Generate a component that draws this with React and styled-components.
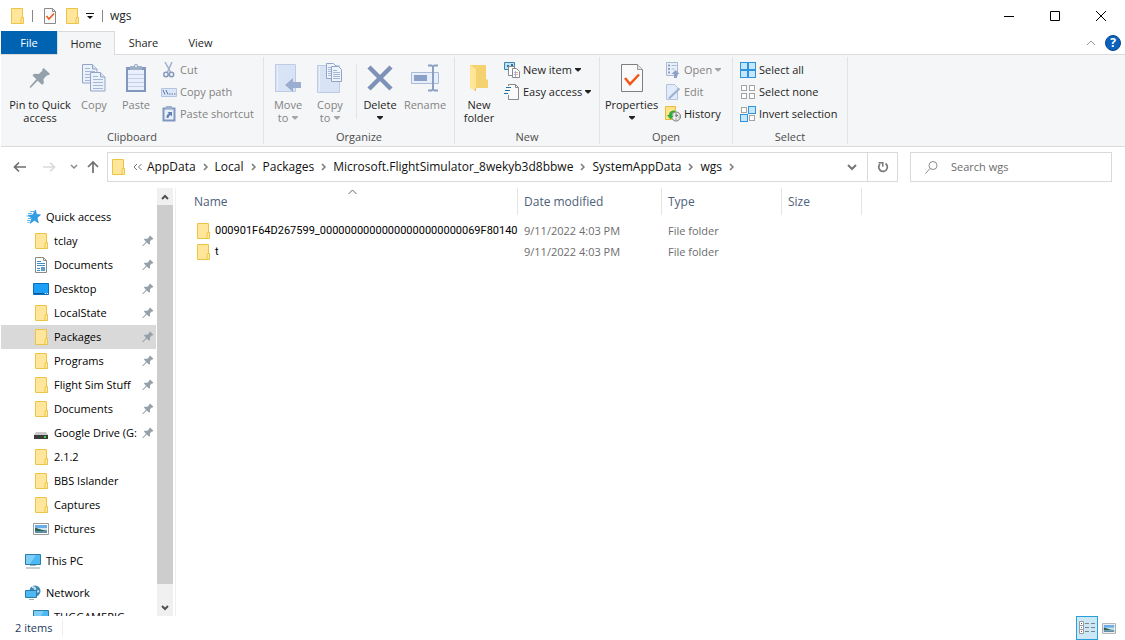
import React from "react";
import styled, { createGlobalStyle, css } from "styled-components";

const Global = createGlobalStyle`
  *, *::before, *::after { box-sizing: border-box; }
  body { margin: 0; background: #fff; }
  body, button, input, table { font: 12px/16px "Open Sans", "Noto Sans", sans-serif; color: #1e1e1e; }
  button { border: 0; padding: 0; background: none; }
  a { color: inherit; text-decoration: none; }
  ul, ol { list-style: none; margin: 0; padding: 0; }
  svg { display: block; flex: none; }
`;

/* ---------- icons ---------- */
const Svg = ({ w = 16, h = 16, children, ...rest }) => (
  <svg width={w} height={h} viewBox={`0 0 ${w} ${h}`} fill="none" aria-hidden="true" {...rest}>{children}</svg>
);
const Folder = () => (
  <Svg>
    <path d="M2.500.5h11v9h.500v6H2.500z" fill="#ffe69b" stroke="#edc544" />
    <path d="M12.500 9.500h2v6h-2.500v-4z" fill="#ffe9a8" stroke="#edc544" />
  </Svg>
);
const DocCheck = () => (
  <Svg>
    <path d="M2.500.5h8l3 3v12h-11z" fill="#fafafa" stroke="#8a8a8a" />
    <path d="M10.500.5v3h3" stroke="#8a8a8a" />
    <path d="M4.500 8l2.500 3 5-5.500" stroke="#ee5a1c" strokeWidth="1.600" />
  </Svg>
);
const QatArrow = () => <Svg w={8} h={8}><path d="M0 1.500h8" stroke="#111" /><path d="M1 4h6L4 7z" fill="#111" /></Svg>;
const Caret = ({ c = "#222" }) => <Svg w={6} h={4}><path d="M0 0h6v1L3.500 3.500h-1L0 1z" fill={c} /></Svg>;
const Pushpin = ({ s = 12 }) => (
  <svg width={s} height={s} viewBox="0 0 12 12" aria-hidden="true">
    <path d="M8 .5l3.500 3.300-1.200.8-.5-.1-1.900 2 .2 2.300-1 .9-2.400-2.200L1 11.300l-.6-.1.100-.6L4 6.700 1.900 4.600l.9-.9 2.500.1 2-1.800-.1-.7z" fill="#95a1aa" />
  </svg>
);
const CopyPages = () => (
  <Svg w={26} h={30}>
    {[[1, 1], [9, 9]].map(([x, y]) => (
      <g key={x} transform={`translate(${x} ${y})`}>
        <path d="M.5.5h10l4.500 4.500v14H.5z" fill="#eaf1fb" stroke="#93a5c6" />
        <path d="M10.500.5V5H15" fill="#d5e0f2" stroke="#93a5c6" />
        <path d="M3 4.500h5M3 7.500h10M3 10.500h10M3 13.500h10M3 16.500h10" stroke="#a5b6d6" />
      </g>
    ))}
  </Svg>
);
const Clip = () => (
  <Svg w={22} h={30}>
    <path d="M1 4h20v25H1z" fill="#8297bf" />
    <path d="M3 7h16v20H3z" fill="#e9f0fb" />
    <path d="M3 11.500h16M3 15.500h16M3 19.500h16M3 23.500h16" stroke="#c4d1e8" />
    <path d="M5 3h4c0-3 4-3 4 0h4v4H5z" fill="#9fafc9" />
    <circle cx="11" cy="3" r="1" fill="#eef2f9" />
  </Svg>
);
const Scissors = () => (
  <Svg>
    <path d="M4 0l5.500 10M11 0L6.500 10" stroke="#9fb0cc" strokeWidth="1.500" />
    <circle cx="5" cy="12.500" r="2.200" stroke="#8599bd" strokeWidth="1.500" />
    <circle cx="10.500" cy="12.500" r="2.200" stroke="#8599bd" strokeWidth="1.500" />
  </Svg>
);
const PathIcon = () => (
  <Svg>
    <path d="M.5 4.500h15v8H.5z" fill="#dbe7f8" stroke="#b3c4e0" />
    <path d="M2 6l2 4.500M5 6l2 4.500M8 10h1.500M10.500 10H12M13 10h1.500" stroke="#5d74a0" />
  </Svg>
);
const PasteShortcut = () => (
  <Svg>
    <path d="M2.500 2.500h11v12h-11z" fill="#e9f0fb" stroke="#8297bf" strokeWidth="2" />
    <path d="M5 0h6v3H5z" fill="#9fafc9" />
    <path d="M5.500 12c0-3 1-4 2.500-4.500L6.500 6H11v4.500L9.500 9c-1 .5-1.500 1-2 3z" fill="#6480b3" />
  </Svg>
);
const MoveTo = () => (
  <Svg w={28} h={30}>
    <path d="M1.500 1.500h20v27h-20z" fill="#d8e4f6" stroke="#bccce6" />
    <path d="M3.500 2v26" stroke="#e8effa" />
    <path d="M11 22l8-7v4h8v6h-8v4z" fill="#9badd0" />
  </Svg>
);
const CopyTo = () => (
  <Svg w={28} h={32}>
    <path d="M1.500 3.500h22v27h-22z" fill="#d8e4f6" stroke="#bccce6" />
    <path d="M3.500 4v26" stroke="#e8effa" />
    {[[10, 1], [15, 4]].map(([x, y]) => (
      <g key={x} transform={`translate(${x} ${y})`}>
        <path d="M.5.5h7l3 3v12H.5z" fill="#eef4fc" stroke="#93a5c6" />
        <path d="M2 4.500h4M2 6.500h7M2 8.500h7M2 10.500h7M2 12.500h7" stroke="#a5b6d6" />
      </g>
    ))}
  </Svg>
);
const DeleteX = () => <Svg w={28} h={28}><path d="M3 3l22 22M25 3L3 25" stroke="#7d92b6" strokeWidth="4.500" /></Svg>;
const RenameIcon = () => (
  <Svg w={30} h={28}>
    <path d="M1.500 8.500h27v11h-27z" fill="#e6effb" stroke="#a9bbd9" />
    <path d="M4 11h13v6H4z" fill="#8ba0c6" />
    <path d="M18 1.500h3.500l1.500 1 1.500-1H28M18 26.500h3.500l1.500-1 1.500 1H28M23 2v24" stroke="#8b9fc2" strokeWidth="2" />
  </Svg>
);
const NewFolder = () => (
  <Svg w={20} h={28}>
    <path d="M1 1h16v14l2 1v8H1z" fill="#f5d270" />
    <path d="M1 1l6 4v22l-6-3z" fill="#ffe597" />
    <path d="M7 24v3l-2-1" fill="#e5b94d" />
  </Svg>
);
const NewItem = () => (
  <Svg>
    <path d="M.5.5h10v7H.5z" fill="#bfe3f6" stroke="#3b87ad" />
    <path d="M3 3h2v2H3zM7 2h2v2H7z" fill="#2c7299" />
    <path d="M4.500 4.500h6v9h-6z" fill="#fff" stroke="#8a8a8a" />
    <path d="M8.500 6.500h4l3 3v6h-7z" fill="#fff" stroke="#8a8a8a" />
    <path d="M10 10.500h4M10 12.500h4" stroke="#e7a0a0" />
    <path d="M11.500 9v6" stroke="#8dbbe6" />
  </Svg>
);
const EasyAccess = () => (
  <Svg>
    <path d="M4.500 2V.5h7l3 3v12h-10V11" fill="#fafafa" stroke="#8a8a8a" />
    <path d="M11.500.5v3h3" stroke="#8a8a8a" />
    <path d="M2 3.500h5M1 6.500h5M0 9.500h4" stroke="#1f6fa8" />
  </Svg>
);
const Properties = () => (
  <Svg w={22} h={30}>
    <path d="M.5 1.500h16l5 5v22H.5z" fill="#fafafa" stroke="#7f7f7f" />
    <path d="M16.500 1.500v5h5" fill="#e4e4e4" stroke="#9a9a9a" />
    <path d="M4 15l5 6 9-9.500" stroke="#f0591a" strokeWidth="2.500" />
  </Svg>
);
const OpenIcon = () => (
  <Svg>
    <path d="M1.500.5h11v13h-11z" fill="#eaf0fa" stroke="#a9b8d4" />
    <path d="M3 2.500h2v2H3zM3 6h2v2H3zM3 9.500h2v2H3z" fill="#8fa2c6" />
    <path d="M6.500 3.500h5M6.500 7h3" stroke="#a9b8d4" />
    <path d="M10.500 8l4 4h-2.500v4H9v-4H6.500z" fill="#8fa2c6" />
  </Svg>
);
const EditIcon = () => (
  <Svg>
    <path d="M1.500.5h8l3 3v12h-11z" fill="#e2ebf9" stroke="#b3c2de" />
    <path d="M14.500 4.500l-9 8.500-1.500 1.500" stroke="#9fb1d1" strokeWidth="2" />
  </Svg>
);
const HistoryIcon = () => (
  <Svg>
    <path d="M.5.5h10v13H.5z" fill="#ffe28a" stroke="#e8bd3c" />
    <circle cx="11" cy="10.500" r="4.500" fill="#eee" stroke="#777" />
    <path d="M11 7.500v3l2-1.500M13.500 11h1M11 13.500v-1" stroke="#555" />
    <path d="M10 4.500C6 4 4 6.500 4 9H2l3.500 4.500L9 9.500H7C7 7 8 6 10 6z" fill="#2fae3b" />
  </Svg>
);
const Tiles = ({ on }) => (
  <Svg>
    {[[0, 0], [8, 0], [0, 8], [8, 8]].map(([x, y], i) => on[i] ? (
      <rect key={i} x={x + .5} y={y + .5} width="7" height="7" fill="#c6e6fa" stroke="#2f92dd" />
    ) : (
      <rect key={i} x={x + 1.500} y={y + 1.500} width="5" height="5" fill="#fff" stroke="#a3a3a3" />
    ))}
  </Svg>
);
const Arrow = ({ d, c }) => <Svg><path d={d} stroke={c} strokeWidth="1.700" /></Svg>;
const Chevron = ({ d = "M1 1l3 3 3-3", c = "#555", sw = 2, w = 8, h = 6 }) => (
  <Svg w={w} h={h}><path d={d} stroke={c} strokeWidth={sw} /></Svg>
);
const Refresh = () => (
  <Svg w={12} h={12}>
    <path d="M8.500 2.500A4.300 4.300 0 1 1 3 3" stroke="#777" strokeWidth="1.700" />
    <path d="M1.500 1.700h4.300v4" stroke="#777" strokeWidth="1.500" />
  </Svg>
);
const Magnifier = () => (
  <Svg w={13} h={13}><circle cx="8" cy="4.500" r="4" stroke="#8a8a8a" /><path d="M5 7.500L.5 12.500" stroke="#8a8a8a" /></Svg>
);
const Star = () => (
  <Svg>
    <path d="M10.500 1l1 4.500 4 .3-3.500 3 1.300 5L9.500 11.300l-4.300 3 1.600-5L3 6.300l4.700-.3z" fill="#2f9fe8" stroke="#1b83cf" strokeWidth=".6" />
    <path d="M5 2.500h4M3 4.500h4M1.500 7h3M3 9.500h3M2 11.500h3.500M2.500 13.500h2" stroke="#5fb5ea" />
  </Svg>
);
const DocIcon = () => (
  <Svg>
    <path d="M2.500.5h8l3 3v12h-11z" fill="#fff" stroke="#8a8a8a" />
    <path d="M10.500.5v3h3" stroke="#8a8a8a" />
    <path d="M4 4.500h4M4 6.500h8M4 8.500h8M4 11.500h3M4 13.500h3" stroke="#3d8cc4" />
    <path d="M8 10h4v4H8z" fill="#5aa2c9" />
  </Svg>
);
const DesktopIcon = () => (
  <Svg><path d="M.5 2.500h15v11H.5z" fill="#1ca0f7" stroke="#0b6dbb" /><path d="M1 12.500h10" stroke="#0b5a9c" /><path d="M12 12.500h3" stroke="#d9efff" strokeDasharray="1 1" /></Svg>
);
const DriveIcon = () => (
  <Svg><path d="M3 7h10l2 3H1z" fill="#c9c9c9" /><path d="M1 10h14v4H1z" fill="#3c3c3c" /><path d="M11 11h2v2h-2z" fill="#3bdc3b" /></Svg>
);
const PictureIcon = ({ w = 16, h = 12 }) => (
  <svg width={w} height={h} viewBox="0 0 16 12" aria-hidden="true">
    <path d="M.5.5h15v11H.5z" fill="#fff" stroke="#9a9a9a" />
    <path d="M2 2h12v3.500H2z" fill="#6aaeea" /><path d="M2 5h12v2H2z" fill="#cfe6f3" />
    <path d="M2 5c3 0 5 2 12 2.500V8H2z" fill="#2c6250" /><path d="M2 8h12v2H2z" fill="#5f8fa8" />
  </svg>
);
const PcIcon = () => (
  <Svg>
    <path d="M.5 1.500h15v10H.5z" fill="#4cb9f5" stroke="#2c7ba6" /><path d="M1 2h10L5 11H1z" fill="#7dcffa" />
    <path d="M5 12.500h6" stroke="#9fb3be" /><path d="M1 15h14" stroke="#8ba2ae" />
  </Svg>
);
const NetworkIcon = () => (
  <Svg>
    <circle cx="10" cy="6" r="5.500" fill="#3c87b5" /><path d="M7 2c2 0 4 1 3 3s2 2 4 1" stroke="#bfe0ef" strokeWidth="2" />
    <path d="M.5 5.500h11v7H.5z" fill="#4cb9f5" stroke="#2c7ba6" /><path d="M4 14.500h5" stroke="#9fb3be" />
  </Svg>
);
const DetailsIcon = () => (
  <Svg w={18} h={14}>
    <path d="M1.500.5h4v4h-4zM1.500 4.500h4v4h-4zM1.500 8.500h4v4h-4z" fill="#fff" stroke="#9a9a9a" />
    <path d="M3 2h1v1H3z" fill="#555" /><path d="M3 6h1v1H3z" fill="#1c86d8" /><path d="M3 10h1v1H3z" fill="#d03020" />
    <path d="M7 2.500h4M13 2.500h4M7 6.500h4M13 6.500h4M7 10.500h4M13 10.500h4" stroke="#7b868c" />
  </Svg>
);

/* ---------- window frame ---------- */
const Window = styled.div`
  display: flex; flex-direction: column; height: 100vh; min-width: 900px; padding-left: 1px; overflow: hidden;
`;
const TitleBar = styled.header`
  display: flex; align-items: center; height: 31px; padding: 0 1px 0 8px; flex: none;
`;
const QuickButton = styled.button`display: flex; margin-right: 6px;`;
const TitleDivider = styled.span`width: 1px; height: 12px; background: #888; margin: 0 ${p => p.$after}px 0 ${p => p.$before}px;`;
const Title = styled.h1`margin: 0; font: inherit; flex: 1;`;
const CaptionButton = styled.button`display: grid; place-items: center; width: 46px; height: 31px;`;

const Tabs = styled.nav`
  display: flex; height: 24px; flex: none; position: relative; z-index: 1; margin-bottom: -1px;
`;
const Tab = styled.button`
  width: 57px; height: 23px; color: #262626; font-size: 11px;
  ${p => p.$kind === "file" && css`width: 56px; background: #0063b1; color: #fff;`}
  ${p => p.$kind === "active" && css`width: 58px; height: 24px; background: #f5f6f7; border: 1px solid #dadbdc; border-bottom: 0;`}
`;
const TabTools = styled.div`display: flex; align-items: center; gap: 9px; margin-left: auto; padding-right: 4px;`;
const Help = styled.button`
  width: 16px; height: 16px; border-radius: 8px; background: #0a62bd; border: 1px solid #084a8c; color: #fff; font-weight: 700; line-height: 14px;
`;

const Ribbon = styled.div`
  display: flex; flex: none; height: 93px; padding: 2px 0; background: #f5f6f7;
  border-top: 1px solid #dadbdc; border-bottom: 1px solid #dadbdc;
`;
const Group = styled.section`
  display: flex; flex-direction: column; flex: none; width: ${p => p.$w}px; border-right: 1px solid #e2e3e4;
`;
const GroupBody = styled.div`display: flex; flex: 1; padding-left: ${p => p.$pad || 0}px;`;
const GroupLabel = styled.h2`margin: 0; font: inherit; font-size: 11px; line-height: 14px; text-align: center; color: #4d4d4d;`;
const BigButton = styled.button`
  display: flex; flex-direction: column; align-items: center; justify-content: flex-start;
  width: ${p => p.$w}px; padding-top: 5px; font-size: 11px; line-height: 13px; white-space: nowrap; color: ${p => p.$off ? "#838383" : "#1e1e1e"};
`;
const BigIcon = styled.span`display: grid; place-items: center; height: 32px; margin-bottom: 4px;`;
const Line = styled.span`display: flex; align-items: center; justify-content: center; gap: 4px; height: 13px;`;
const InnerDivider = styled.span`width: 1px; margin: 7px 2px 11px 5px; background: #e2e3e4;`;
const SmallStack = styled.div`display: flex; flex-direction: column; padding: 2px 0 0 2px;`;
const SmallButton = styled.button`
  display: flex; align-items: center; gap: 3px; height: 22px; font-size: 11px; white-space: nowrap; color: ${p => p.$off ? "#838383" : "#1e1e1e"};
`;

/* ---------- address row ---------- */
const AddressRow = styled.div`display: flex; align-items: center; flex: none; height: 41px; padding: 0 13px 1px 11px;`;
const NavButton = styled.button`display: grid; place-items: center; width: ${p => p.$w}px; height: 24px;`;
const AddressBox = styled.div`display: flex; align-items: center; flex: 1; height: 30px; border: 1px solid #d9d9d9; padding-left: 2px;`;
const Crumbs = styled.ol`display: flex; align-items: center; flex: 1; margin-left: 7px;`;
const Crumb = styled.li`display: flex; align-items: center; color: #111;`;
const CrumbGap = styled.span`display: grid; place-items: center; width: ${p => p.$w}px;`;
const BoxButton = styled.button`
  display: grid; place-items: center; width: 30px; height: 28px;
  ${p => p.$line && css`border-left: 1px solid #d9d9d9;`}
`;
const SearchBox = styled.label`
  display: flex; align-items: center; gap: 13px; width: 202px; height: 30px; margin-left: 12px; padding-left: 14px; border: 1px solid #d9d9d9;
`;
const SearchInput = styled.input`
  flex: 1; min-width: 0; border: 0; padding: 0; outline: 0; background: none; font-size: 11px;
  &::placeholder { color: #6d6d6d; opacity: 1; }
`;

/* ---------- body ---------- */
const Body = styled.div`display: flex; flex: 1; min-height: 0;`;
const Side = styled.nav`display: flex; width: 175px; flex: none; border-right: 1px solid #f0f0f0;`;
const Tree = styled.ul`width: 155px; padding-top: 17px; overflow: hidden;`;
const TreeItem = styled.li`
  margin-top: ${p => p.$gap ? 8 : 0}px; background: ${p => p.$on ? "#d9d9d9" : "transparent"};
`;
const TreeLink = styled.a`
  display: flex; align-items: center; height: 24px; padding: 0 2px 0 ${p => p.$top ? 24 : 32}px; color: #000; font-size: 11px;
`;
const TreeText = styled.span`flex: 1; margin-left: 5px; white-space: nowrap;`;
const ScrollBar = styled.div`display: flex; flex-direction: column; width: 16px; margin-left: 1px; background: #f0f0f0;`;
const ScrollButton = styled.button`display: grid; place-items: center; height: 17px;`;
const Thumb = styled.div`flex: 1; margin-bottom: 15px; background: #cdcdcd;`;

const Files = styled.main`flex: 1; min-width: 0; position: relative;`;
const SortMark = styled.span`position: absolute; left: 172px; top: 1px;`;
const Table = styled.table`border-collapse: separate; border-spacing: 0; table-layout: fixed; width: 686px;`;
const Th = styled.th`
  height: 27px; padding: 1px 0 0 ${p => p.$first ? 18 : 6}px; text-align: left; font-weight: 400; color: #4c607a; border-right: 1px solid #e5e5e5;
`;
const Td = styled.td`height: 21px; padding: 0 0 0 6px; color: #6d6d6d; font-size: 11px; white-space: nowrap;`;
const NameCell = styled(Td)`padding-left: 19px; color: #000;`;
const FileName = styled.a`display: flex; align-items: center; gap: 4px; font-family: Roboto, "Open Sans", sans-serif;`;
const Spacer = styled.tr`height: 5px;`;

const Status = styled.footer`display: flex; align-items: center; flex: none; height: 24px; padding: 0 5px 0 14px; color: #1e395b;`;
const Count = styled.span`padding-right: 10px; border-right: 1px solid #eee; flex: none; font-size: 11px;`;
const ViewButton = styled.button`
  display: grid; place-items: center; width: 22px; height: 24px;
  ${p => p.$on && css`background: #cce8f6; border: 1px solid #269fdc;`}
`;
const Views = styled.div`display: flex; margin-left: auto;`;

const Big = ({ icon, lines, caret, ...p }) => (
  <BigButton {...p}>
    <BigIcon>{icon}</BigIcon>
    {lines.map((t, i) => (
      <Line key={t}>{t}{caret === "inline" && i === lines.length - 1 && <Caret c="#a6a6a6" />}</Line>
    ))}
    {caret === "below" && <Line><Caret /></Line>}
  </BigButton>
);
const Small = ({ icon, label, caret, off }) => (
  <SmallButton $off={off}>{icon}{label}{caret && <Caret c={off ? "#a6a6a6" : "#222"} />}</SmallButton>
);

const tree = [
  { t: "Quick access", icon: <Star />, top: 1 },
  { t: "tclay", icon: <Folder />, pin: 1 },
  { t: "Documents", icon: <DocIcon />, pin: 1 },
  { t: "Desktop", icon: <DesktopIcon />, pin: 1 },
  { t: "LocalState", icon: <Folder />, pin: 1 },
  { t: "Packages", icon: <Folder />, pin: 1, on: 1 },
  { t: "Programs", icon: <Folder />, pin: 1 },
  { t: "Flight Sim Stuff", icon: <Folder />, pin: 1 },
  { t: "Documents", icon: <Folder />, pin: 1 },
  { t: "Google Drive (G:", icon: <DriveIcon />, pin: 1 },
  { t: "2.1.2", icon: <Folder /> },
  { t: "BBS Islander", icon: <Folder /> },
  { t: "Captures", icon: <Folder /> },
  { t: "Pictures", icon: <PictureIcon /> },
  { t: "This PC", icon: <PcIcon />, top: 1, gap: 1 },
  { t: "Network", icon: <NetworkIcon />, top: 1, gap: 1 },
  { t: "THGGAMERIG", icon: <PcIcon /> },
];
const crumbs = ["AppData", "Local", "Packages", "Microsoft.FlightSimulator_8wekyb3d8bbwe", "SystemAppData", "wgs"];
const files = ["000901F64D267599_00000000000000000000000069F80140", "t"];

export default function App() {
  return (
    <Window>
      <Global />
      <TitleBar>
        <Folder />
        <TitleDivider $before={7} $after={9} />
        <QuickButton aria-label="Properties"><DocCheck /></QuickButton>
        <QuickButton aria-label="New folder"><Folder /></QuickButton>
        <QuickButton aria-label="Customize Quick Access Toolbar"><QatArrow /></QuickButton>
        <TitleDivider $before={2} $after={7} />
        <Title>wgs</Title>
        <CaptionButton aria-label="Minimize"><Svg w={10} h={10}><path d="M0 5.500h10" stroke="#000" /></Svg></CaptionButton>
        <CaptionButton aria-label="Maximize"><Svg w={10} h={10}><path d="M.5.5h9v9h-9z" stroke="#000" /></Svg></CaptionButton>
        <CaptionButton aria-label="Close"><Svg w={10} h={10}><path d="M0 0l10 10M10 0L0 10" stroke="#000" /></Svg></CaptionButton>
      </TitleBar>
      <Tabs>
        <Tab $kind="file">File</Tab>
        <Tab $kind="active">Home</Tab>
        <Tab>Share</Tab>
        <Tab>View</Tab>
        <TabTools>
          <button aria-label="Minimize the Ribbon"><Chevron d="M1 5l4-4 4 4" w={10} h={6} c="#999" sw={1} /></button>
          <Help aria-label="Help">?</Help>
        </TabTools>
      </Tabs>
      <Ribbon>
        <Group $w={263}>
          <GroupBody $pad={4}>
            <Big $w={70} icon={<Pushpin s={22} />} lines={["Pin to Quick", "access"]} />
            <Big $w={38} $off icon={<CopyPages />} lines={["Copy"]} />
            <Big $w={46} $off icon={<Clip />} lines={["Paste"]} />
            <SmallStack>
              <Small off icon={<Scissors />} label="Cut" />
              <Small off icon={<PathIcon />} label="Copy path" />
              <Small off icon={<PasteShortcut />} label="Paste shortcut" />
            </SmallStack>
          </GroupBody>
          <GroupLabel>Clipboard</GroupLabel>
        </Group>
        <Group $w={191}>
          <GroupBody $pad={3}>
            <Big $w={42} $off icon={<MoveTo />} lines={["Move", "to"]} caret="inline" />
            <Big $w={42} $off icon={<CopyTo />} lines={["Copy", "to"]} caret="inline" />
            <InnerDivider />
            <Big $w={42} icon={<DeleteX />} lines={["Delete"]} caret="below" />
            <Big $w={48} $off icon={<RenameIcon />} lines={["Rename"]} />
          </GroupBody>
          <GroupLabel>Organize</GroupLabel>
        </Group>
        <Group $w={145}>
          <GroupBody $pad={1}>
            <Big $w={46} icon={<NewFolder />} lines={["New", "folder"]} />
            <SmallStack>
              <Small icon={<NewItem />} label="New item" caret />
              <Small icon={<EasyAccess />} label="Easy access" caret />
            </SmallStack>
          </GroupBody>
          <GroupLabel>New</GroupLabel>
        </Group>
        <Group $w={133}>
          <GroupBody>
            <Big $w={63} icon={<Properties />} lines={["Properties"]} caret="below" />
            <SmallStack>
              <Small off icon={<OpenIcon />} label="Open" caret />
              <Small off icon={<EditIcon />} label="Edit" />
              <Small icon={<HistoryIcon />} label="History" />
            </SmallStack>
          </GroupBody>
          <GroupLabel>Open</GroupLabel>
        </Group>
        <Group $w={115}>
          <GroupBody $pad={5}>
            <SmallStack>
              <Small icon={<Tiles on={[1, 1, 1, 1]} />} label="Select all" />
              <Small icon={<Tiles on={[0, 0, 0, 0]} />} label="Select none" />
              <Small icon={<Tiles on={[0, 1, 1, 0]} />} label="Invert selection" />
            </SmallStack>
          </GroupBody>
          <GroupLabel>Select</GroupLabel>
        </Group>
      </Ribbon>
      <AddressRow>
        <NavButton $w={16} aria-label="Back"><Arrow d="M7 3.500L2.500 8 7 12.500M3 8h11" c="#6f6f6f" /></NavButton>
        <NavButton $w={42} aria-label="Forward"><Arrow d="M9 3.500L13.500 8 9 12.500M13 8H2" c="#dadada" /></NavButton>
        <NavButton $w={8} aria-label="Recent locations"><Chevron c="#8a8a8a" sw={1.5} /></NavButton>
        <NavButton $w={29} aria-label="Up"><Arrow d="M3 8l5-5 5 5M8 3v11" c="#6f6f6f" /></NavButton>
        <AddressBox>
          <Folder />
          <Crumbs>
            <Crumb><Chevron d="M4 1L1 4l3 3M8.500 1l-3 3 3 3" w={9} h={8} c="#777" sw={1} /><CrumbGap $w={5} /></Crumb>
            {crumbs.map(c => (
              <Crumb key={c}>
                <a href="#">{c}</a>
                <CrumbGap $w={19}><Chevron d="M1 1l3 3-3 3" w={5} h={8} c="#777" sw={1.5} /></CrumbGap>
              </Crumb>
            ))}
          </Crumbs>
          <BoxButton aria-label="Previous locations"><Chevron d="M1 1l4 4 4-4" w={10} h={7} c="#777" /></BoxButton>
          <BoxButton $line aria-label="Refresh"><Refresh /></BoxButton>
        </AddressBox>
        <SearchBox><Magnifier /><SearchInput type="text" aria-label="Search wgs" placeholder="Search wgs" /></SearchBox>
      </AddressRow>
      <Body>
        <Side aria-label="Folders">
          <Tree>
            {tree.map((n, i) => (
              <TreeItem key={i} $gap={n.gap} $on={n.on}>
                <TreeLink href="#" $top={n.top}>{n.icon}<TreeText>{n.t}</TreeText>{n.pin && <Pushpin />}</TreeLink>
              </TreeItem>
            ))}
          </Tree>
          <ScrollBar>
            <ScrollButton aria-label="Scroll up"><Chevron d="M1 5l3-3 3 3" c="#505050" /></ScrollButton>
            <Thumb />
            <ScrollButton aria-label="Scroll down"><Chevron c="#505050" /></ScrollButton>
          </ScrollBar>
        </Side>
        <Files>
          <Table>
            <colgroup><col width="342" /><col width="144" /><col width="120" /><col width="80" /></colgroup>
            <thead><tr><Th $first>Name</Th><Th>Date modified</Th><Th>Type</Th><Th>Size</Th></tr></thead>
            <tbody>
              <Spacer />
              {files.map(f => (
                <tr key={f}>
                  <NameCell><FileName href="#"><Folder />{f}</FileName></NameCell>
                  <Td>9/11/2022 4:03 PM</Td><Td>File folder</Td><Td />
                </tr>
              ))}
            </tbody>
          </Table>
          <SortMark><Chevron d="M.5 5l4-4 4 4" w={9} h={6} c="#666" sw={1} /></SortMark>
        </Files>
      </Body>
      <Status>
        <Count>2 items</Count>
        <Views>
          <ViewButton $on aria-label="Details"><DetailsIcon /></ViewButton>
          <ViewButton aria-label="Large icons"><PictureIcon w={14} h={11} /></ViewButton>
        </Views>
      </Status>
    </Window>
  );
}
